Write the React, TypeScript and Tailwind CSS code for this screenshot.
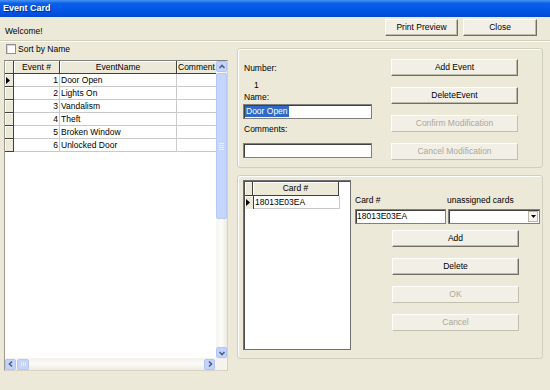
import React from 'react';

const events: [number, string][] = [
  [1, 'Door Open'],
  [2, 'Lights On'],
  [3, 'Vandalism'],
  [4, 'Theft'],
  [5, 'Broken Window'],
  [6, 'Unlocked Door'],
];

function XpButton({ label, width, disabled }: { label: string; width: string; disabled?: boolean }) {
  return (
    <div
      className={`${width} h-[17px] shrink-0 flex items-center justify-center bg-[#f1efe6] border border-t-white border-l-white leading-none ${
        disabled
          ? 'border-r-[#c2bfae] border-b-[#c2bfae] text-[#aca899]'
          : 'border-r-[#716f64] border-b-[#716f64] shadow-[inset_-1px_-1px_0_#bdbaa9]'
      }`}
    >
      {label}
    </div>
  );
}

function Pointer() {
  return (
    <svg width="4" height="7" viewBox="0 0 4 7">
      <path d="M0 0 L4 3.5 L0 7 Z" fill="#000" />
    </svg>
  );
}

function Arrow({ dir }: { dir: 'up' | 'down' | 'left' | 'right' }) {
  const pts = {
    up: '1.5,5 4,2.5 6.5,5',
    down: '1.5,3 4,5.5 6.5,3',
    left: '5,1.5 2.5,4 5,6.5',
    right: '3,1.5 5.5,4 3,6.5',
  }[dir];
  return (
    <div className="w-[11px] h-[11px] shrink-0 rounded-[2px] bg-[#c3d3fb] border border-[#b1c4f3] flex items-center justify-center">
      <svg width="8" height="8" viewBox="0 0 8 8">
        <polyline points={pts} fill="none" stroke="#4d6185" strokeWidth="1.6" />
      </svg>
    </div>
  );
}

function HeaderCell({ w, children, align = 'center' }: { w: string; children?: React.ReactNode; align?: string }) {
  return (
    <div
      className={`${w} h-full shrink-0 bg-[#ece9d8] border-r border-[#404040] shadow-[inset_1px_1px_0_#fff] px-[1px] overflow-hidden whitespace-nowrap leading-[12px] ${
        align === 'center' ? 'text-center' : 'text-left'
      }`}
    >
      {children}
    </div>
  );
}

function RowHead({ selected }: { selected?: boolean }) {
  return (
    <div className="w-[9px] h-full shrink-0 bg-[#ece9d8] border-r border-[#404040] shadow-[inset_1px_1px_0_#fff] flex items-center pl-[1px]">
      {selected && <Pointer />}
    </div>
  );
}

function TextBox({ width, children }: { width: string; children?: React.ReactNode }) {
  return (
    <div className={`${width} h-[15px] shrink-0 bg-white border border-[#808080] shadow-[inset_1px_1px_0_#404040] flex items-center pl-[1px] leading-none whitespace-nowrap`}>
      {children}
    </div>
  );
}

export default function App() {
  return (
    <div className="w-[550px] h-[390px] bg-[#ece9d8] overflow-hidden flex flex-col text-[8.5px] text-black font-['Liberation_Sans',Arial,sans-serif]">
      {/* title bar */}
      <div className="h-[17px] shrink-0 flex items-center pl-[3px] bg-[linear-gradient(to_bottom,#4a93f5,#0b5fe8_20%,#0055e4_65%,#0049d2)]">
        <span className="text-white font-bold text-[9px] [text-shadow:1px_1px_0_#0a2a8a]">Event Card</span>
      </div>

      {/* top bar */}
      <div className="h-[23px] shrink-0 flex items-start">
        <span className="ml-[5px] mt-[9px] leading-[11px]">Welcome!</span>
        <div className="ml-auto mr-[13px] mt-[2px] flex gap-[5px]">
          <XpButton label="Print Preview" width="w-[73px]" />
          <XpButton label="Close" width="w-[74px]" />
        </div>
      </div>
      <div className="h-px shrink-0 bg-[#d2cfbf]" />
      <div className="h-px shrink-0 bg-white" />

      {/* body */}
      <div className="flex flex-1 min-h-0">
        {/* left column */}
        <div className="ml-[4px] w-[224px] shrink-0 flex flex-col">
          <div className="h-[16px] mt-[2px] flex items-start pl-[2px] gap-[2px]">
            <div className="w-[10px] h-[10px] bg-white border border-[#8f8f8f] shadow-[inset_1px_1px_0_#d8d8d8]" />
            <span className="leading-[10px]">Sort by Name</span>
          </div>

          {/* events grid */}
          <div className="h-[311px] flex flex-col border border-t-[#808080] border-l-[#9d9a8b] border-r-[#d6d3c6] border-b-[#d6d3c6] bg-white">
            <div className="flex flex-1 min-h-0">
              <div className="flex-1 min-w-0 flex flex-col">
                <div className="h-[13px] flex border-b border-[#404040]">
                  <HeaderCell w="w-[9px]" />
                  <HeaderCell w="w-[46px]">Event #</HeaderCell>
                  <HeaderCell w="w-[117px]">EventName</HeaderCell>
                  <div className="flex-1 h-full bg-[#ece9d8] shadow-[inset_1px_1px_0_#fff] pl-[1px] overflow-hidden whitespace-nowrap leading-[12px]">
                    Comment
                  </div>
                </div>
                {events.map(([n, name], i) => (
                  <div key={n} className="h-[13px] flex">
                    <div className="w-[9px] h-full shrink-0 bg-[#ece9d8] border-r border-b border-[#404040] shadow-[inset_1px_1px_0_#fff] flex items-center pl-[1px]">
                      {i === 0 && <Pointer />}
                    </div>
                    <div className="w-[46px] h-full shrink-0 border-r border-b border-[#c9c9c9] text-right pr-[1px] leading-[12px]">{n}</div>
                    <div className="w-[117px] h-full shrink-0 border-r border-b border-[#c9c9c9] pl-[1px] leading-[12px] whitespace-nowrap">{name}</div>
                    <div className="flex-1 h-full border-b border-[#c9c9c9]" />
                  </div>
                ))}
              </div>
              {/* vertical scrollbar */}
              <div className="w-[11px] shrink-0 flex flex-col bg-[linear-gradient(to_right,#f6f5f0,#fbfbf8_50%,#ecebe3)]">
                <Arrow dir="up" />
                <div className="mt-px h-[146px] rounded-[2px] bg-[#c5d5fc] border border-[#b6c9f5] flex flex-col items-center justify-center gap-[1px]">
                  <div className="w-[5px] h-px bg-[#e6edfd]" />
                  <div className="w-[5px] h-px bg-[#e6edfd]" />
                  <div className="w-[5px] h-px bg-[#e6edfd]" />
                  <div className="w-[5px] h-px bg-[#e6edfd]" />
                </div>
                <div className="flex-1" />
                <Arrow dir="down" />
              </div>
            </div>
            {/* horizontal scrollbar */}
            <div className="h-[12px] shrink-0 flex">
              <div className="flex-1 flex items-center gap-px pr-px bg-[linear-gradient(to_bottom,#f3f2ec,#fbfbf8_50%,#ecebe3)]">
                <Arrow dir="left" />
                <div className="w-[12px] h-[11px] rounded-[2px] bg-[#c5d5fc] border border-[#b6c9f5] flex items-center justify-center gap-[1px]">
                  <div className="w-px h-[4px] bg-[#e6edfd]" />
                  <div className="w-px h-[4px] bg-[#e6edfd]" />
                  <div className="w-px h-[4px] bg-[#e6edfd]" />
                </div>
                <div className="flex-1" />
                <Arrow dir="right" />
              </div>
              <div className="w-[11px] shrink-0 bg-[#f4f3ee]" />
            </div>
          </div>
        </div>

        {/* right column */}
        <div className="ml-[9px] w-[306px] shrink-0 flex flex-col mt-[6px]">
          {/* event group */}
          <div className="h-[120px] shrink-0 rounded-[3px] border border-[#d0d0bf] shadow-[inset_1px_1px_0_#fff] flex pl-[5px]">
            <div className="w-[129px] shrink-0 flex flex-col pt-[14px]">
              <span className="pl-[1px] leading-[11px]">Number:</span>
              <span className="pl-[11px] mt-[6px] leading-[11px]">1</span>
              <span className="pl-[1px] mt-px leading-[11px]">Name:</span>
              <div className="mt-px">
                <TextBox width="w-[129px]">
                  <span className="bg-[#316ac5] text-white leading-[11px] px-px">Door Open</span>
                </TextBox>
              </div>
              <span className="pl-[1px] mt-[5px] leading-[11px]">Comments:</span>
              <div className="mt-[8px]">
                <TextBox width="w-[129px]" />
              </div>
            </div>
            <div className="ml-[19px] pt-[10px] flex flex-col gap-[11px]">
              <XpButton label="Add Event" width="w-[127px]" />
              <XpButton label="DeleteEvent" width="w-[127px]" />
              <XpButton label="Confirm Modification" width="w-[127px]" disabled />
              <XpButton label="Cancel Modification" width="w-[127px]" disabled />
            </div>
          </div>

          {/* card group */}
          <div className="mt-[7px] h-[184px] shrink-0 rounded-[3px] border border-[#d0d0bf] shadow-[inset_1px_1px_0_#fff] flex pl-[5px] pt-[4px]">
            <div className="w-[108px] h-[170px] shrink-0 bg-white border border-[#707070] shadow-[inset_1px_1px_0_#505050] flex flex-col pt-px pl-px">
              <div className="h-[14px] flex">
                <div className="h-full flex border-b border-[#404040]">
                  <HeaderCell w="w-[8px]" />
                  <HeaderCell w="w-[86px]">Card #</HeaderCell>
                </div>
              </div>
              <div className="h-[13px] flex">
                <RowHead selected />
                <div className="w-[86px] h-full border-r border-b border-[#c9c9c9] pl-[1px] leading-[12px]">18013E03EA</div>
              </div>
            </div>

            <div className="ml-[3px] flex flex-col">
              <div className="mt-[15px] h-[11px] flex leading-[11px]">
                <span className="w-[93px] pl-px">Card #</span>
                <span>unassigned cards</span>
              </div>
              <div className="mt-[3px] flex gap-[2px] pl-px">
                <TextBox width="w-[91px]">18013E03EA</TextBox>
                <div className="w-[92px] h-[15px] bg-white border border-[#808080] shadow-[inset_1px_1px_0_#404040] flex justify-end items-center pr-px">
                  <div className="w-[10px] h-[11px] bg-[#f4f3ee] border border-[#b9b6a6] flex items-center justify-center">
                    <svg width="5" height="3" viewBox="0 0 5 3">
                      <path d="M0 0 L5 0 L2.5 3 Z" fill="#000" />
                    </svg>
                  </div>
                </div>
              </div>
              <div className="ml-[38px] mt-[6px] flex flex-col gap-[11px]">
                <XpButton label="Add" width="w-[127px]" />
                <XpButton label="Delete" width="w-[127px]" />
                <XpButton label="OK" width="w-[127px]" disabled />
                <XpButton label="Cancel" width="w-[127px]" disabled />
              </div>
            </div>
          </div>
        </div>
      </div>
    </div>
  );
}
